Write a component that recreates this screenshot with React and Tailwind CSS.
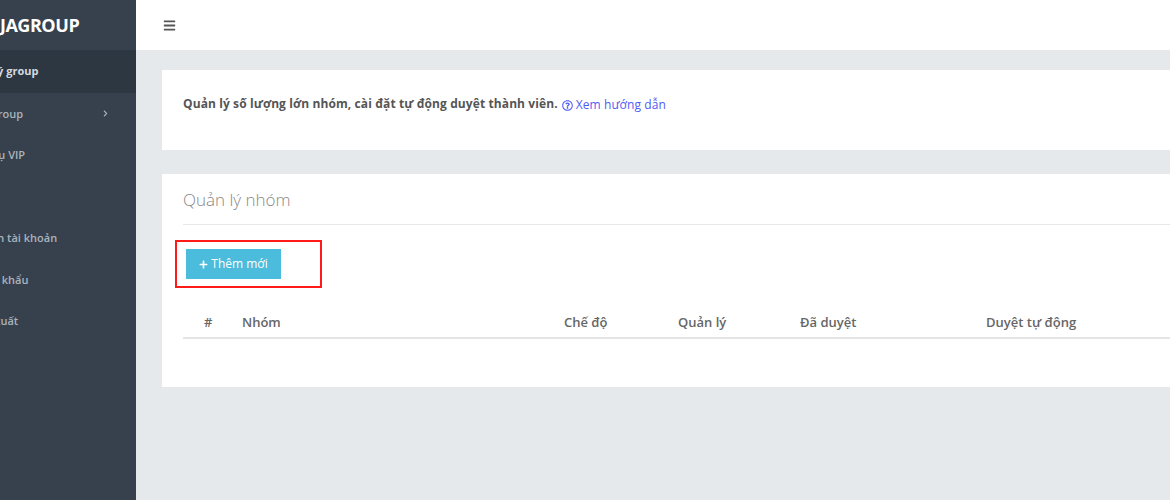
import React from 'react'
import { FaBars, FaPlus, FaChevronRight, FaRegQuestionCircle } from 'react-icons/fa'

const menu = [
    { label: 'Quản lý group', active: true, off: 'ml-[-39px]' },
    { label: 'Các group', arrow: true, off: 'ml-[-30px]' },
    { label: 'Dịch vụ VIP', off: 'ml-[-34px]' },
    { label: 'Nạp', off: 'ml-[-36px]' },
    { label: 'Thông tin tài khoản', off: 'ml-[-46px]' },
    { label: 'Đổi mật khẩu', off: 'ml-[-43px]' },
    { label: 'Đăng xuất', off: 'ml-[-36px]' },
]

const columns = [
    { label: '#', cls: 'w-[59px] pl-[21px]' },
    { label: 'Nhóm', cls: 'w-[322px]' },
    { label: 'Chế độ', cls: 'w-[114px]' },
    { label: 'Quản lý', cls: 'w-[122px]' },
    { label: 'Đã duyệt', cls: 'w-[186px]' },
    { label: 'Duyệt tự động', cls: 'flex-1' },
]

const App = () => {
    return (
        <div
            className="flex w-[1170px] h-[500px] overflow-hidden bg-[#e6e9ec]"
            style={{ fontFamily: '"Open Sans", "Noto Sans", sans-serif' }}
        >
            {/* Sidebar */}
            <aside className="w-[136px] shrink-0 bg-[#36414d] overflow-hidden">
                <div className="h-[50px] flex items-center">
                    <span className="ml-[-34px] text-[18px] font-bold text-white whitespace-nowrap tracking-tight">
                        NINJAGROUP
                    </span>
                </div>
                <nav>
                    {menu.map((item) => (
                        <div
                            key={item.label}
                            className={`relative flex items-center whitespace-nowrap text-[11px] ${
                                item.active
                                    ? 'bg-[#2d3741] text-[#d5dae0] font-bold h-[43px]'
                                    : 'text-[#aab3bc] font-semibold h-[41.5px]'
                            }`}
                        >
                            <span className={item.off}>{item.label}</span>
                            {item.arrow && (
                                <FaChevronRight className="absolute left-[102px] text-[7px] text-[#aab3bc]" />
                            )}
                        </div>
                    ))}
                </nav>
            </aside>

            {/* Main */}
            <div className="flex-1 flex flex-col min-w-0">
                <header className="h-[50px] bg-white flex items-center pl-[27px] shrink-0">
                    <FaBars className="text-[13px] text-[#555]" />
                </header>

                <main className="pl-[26px] pt-[20px] flex flex-col gap-[24px]">
                    <section className="h-[80px] bg-white flex items-start pt-[25px] pl-[21px] text-[12px] tracking-[0.1px]">
                        <span className="font-bold text-[#555]">
                            Quản lý số lượng lớn nhóm, cài đặt tự động duyệt thành viên.
                        </span>
                        <a className="ml-[4px] flex items-center gap-[3px] text-[#4f5bf0] mt-[1px]">
                            <FaRegQuestionCircle className="text-[11px]" />
                            Xem hướng dẫn
                        </a>
                    </section>

                    <section className="h-[213px] bg-white pl-[21px]">
                        <div className="h-[51px] flex items-center border-b border-[#e8e8e8]">
                            <h2 className="text-[17px] font-light text-[#888] mt-[1px]">Quản lý nhóm</h2>
                        </div>
                        <div className="mt-[15px] ml-[-8px] w-[147px] h-[48px] border-2 border-[#ff1a1a] flex items-center pl-[9px]">
                            <button className="h-[30px] w-[95px] bg-[#4bbcdc] text-white text-[12px] flex items-center justify-center gap-[3px]">
                                <FaPlus className="text-[9px]" />
                                Thêm mới
                            </button>
                        </div>
                        <div className="mt-[20px] flex h-[31px] items-center border-b-2 border-[#e4e4e4] text-[13px] font-semibold text-[#666]">
                            {columns.map((c) => (
                                <div key={c.label} className={c.cls}>
                                    {c.label}
                                </div>
                            ))}
                        </div>
                    </section>
                </main>
            </div>
        </div>
    )
}

export default App
